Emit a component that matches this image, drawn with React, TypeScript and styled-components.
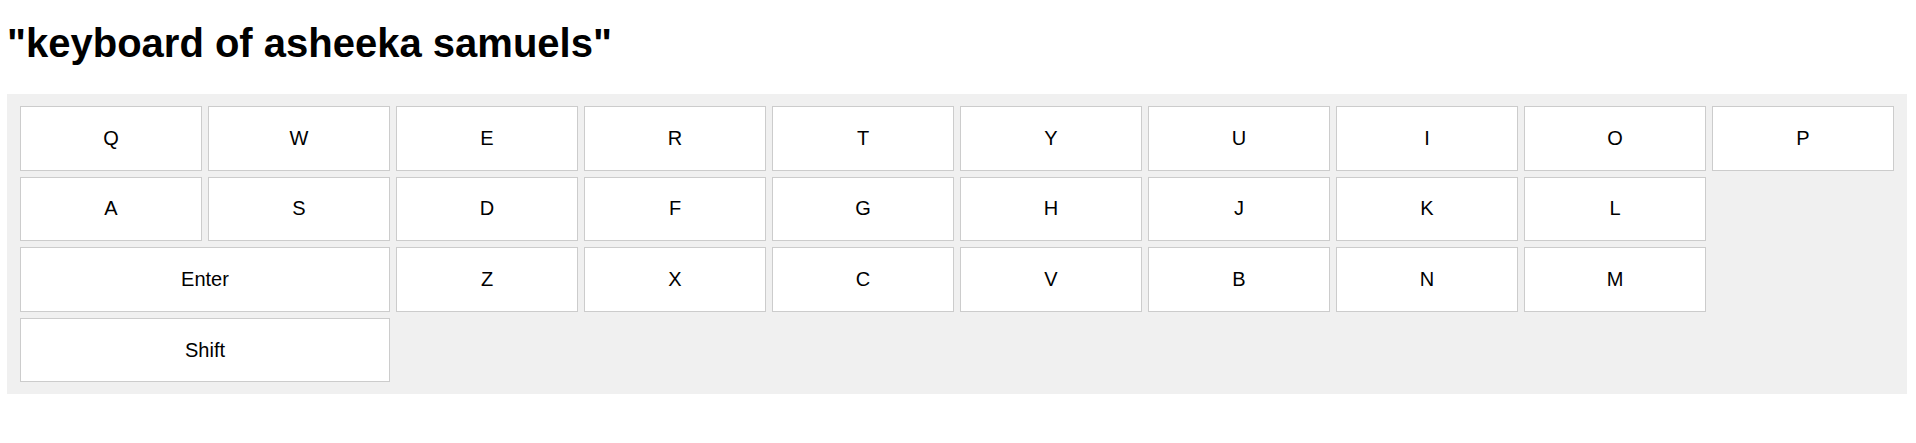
import React from "react";
import styled, { createGlobalStyle } from "styled-components";

const GlobalStyle = createGlobalStyle`
  html, body {
    margin: 0;
    padding: 0;
    background: #ffffff;
    font-family: "Liberation Sans", Arial, sans-serif;
  }
`;

const Page = styled.div`
  padding: 0 9px 0 7px;
`;

const Title = styled.h1`
  margin: 20px 0 28px 0;
  font-size: 40px;
  line-height: 46px;
  font-weight: 700;
  color: #000;
`;

const Board = styled.div`
  display: grid;
  grid-template-columns: repeat(10, 1fr);
  grid-auto-rows: 64.6px;
  gap: 6px;
  padding: 12px 13px;
  background: #f0f0f0;
`;

const Key = styled.button<{ $span?: number }>`
  grid-column: span ${(p) => p.$span ?? 1};
  display: flex;
  align-items: center;
  justify-content: center;
  margin: 0;
  padding: 0;
  background: #ffffff;
  border: 1px solid #cccccc;
  border-radius: 0;
  font-family: "Liberation Sans", Arial, sans-serif;
  font-size: 20px;
  color: #000;
  cursor: pointer;
`;

const Spacer = styled.div<{ $span: number }>`
  grid-column: span ${(p) => p.$span};
`;

type KeyDef = { label: string; span?: number } | { spacer: number };

const rows: KeyDef[][] = [
  "QWERTYUIOP".split("").map((c) => ({ label: c })),
  [...("ASDFGHJKL".split("").map((c) => ({ label: c }))), { spacer: 1 }],
  [{ label: "Enter", span: 2 }, ...("ZXCVBNM".split("").map((c) => ({ label: c }))), { spacer: 1 }],
  [{ label: "Shift", span: 2 }, { spacer: 8 }],
];

export default function App() {
  return (
    <>
      <GlobalStyle />
      <Page>
        <Title>"keyboard of asheeka samuels"</Title>
        <Board>
          {rows.flatMap((row, ri) =>
            row.map((k, ki) =>
              "spacer" in k ? (
                <Spacer key={`${ri}-${ki}`} $span={k.spacer} />
              ) : (
                <Key key={`${ri}-${ki}`} $span={k.span}>
                  {k.label}
                </Key>
              )
            )
          )}
        </Board>
      </Page>
    </>
  );
}
